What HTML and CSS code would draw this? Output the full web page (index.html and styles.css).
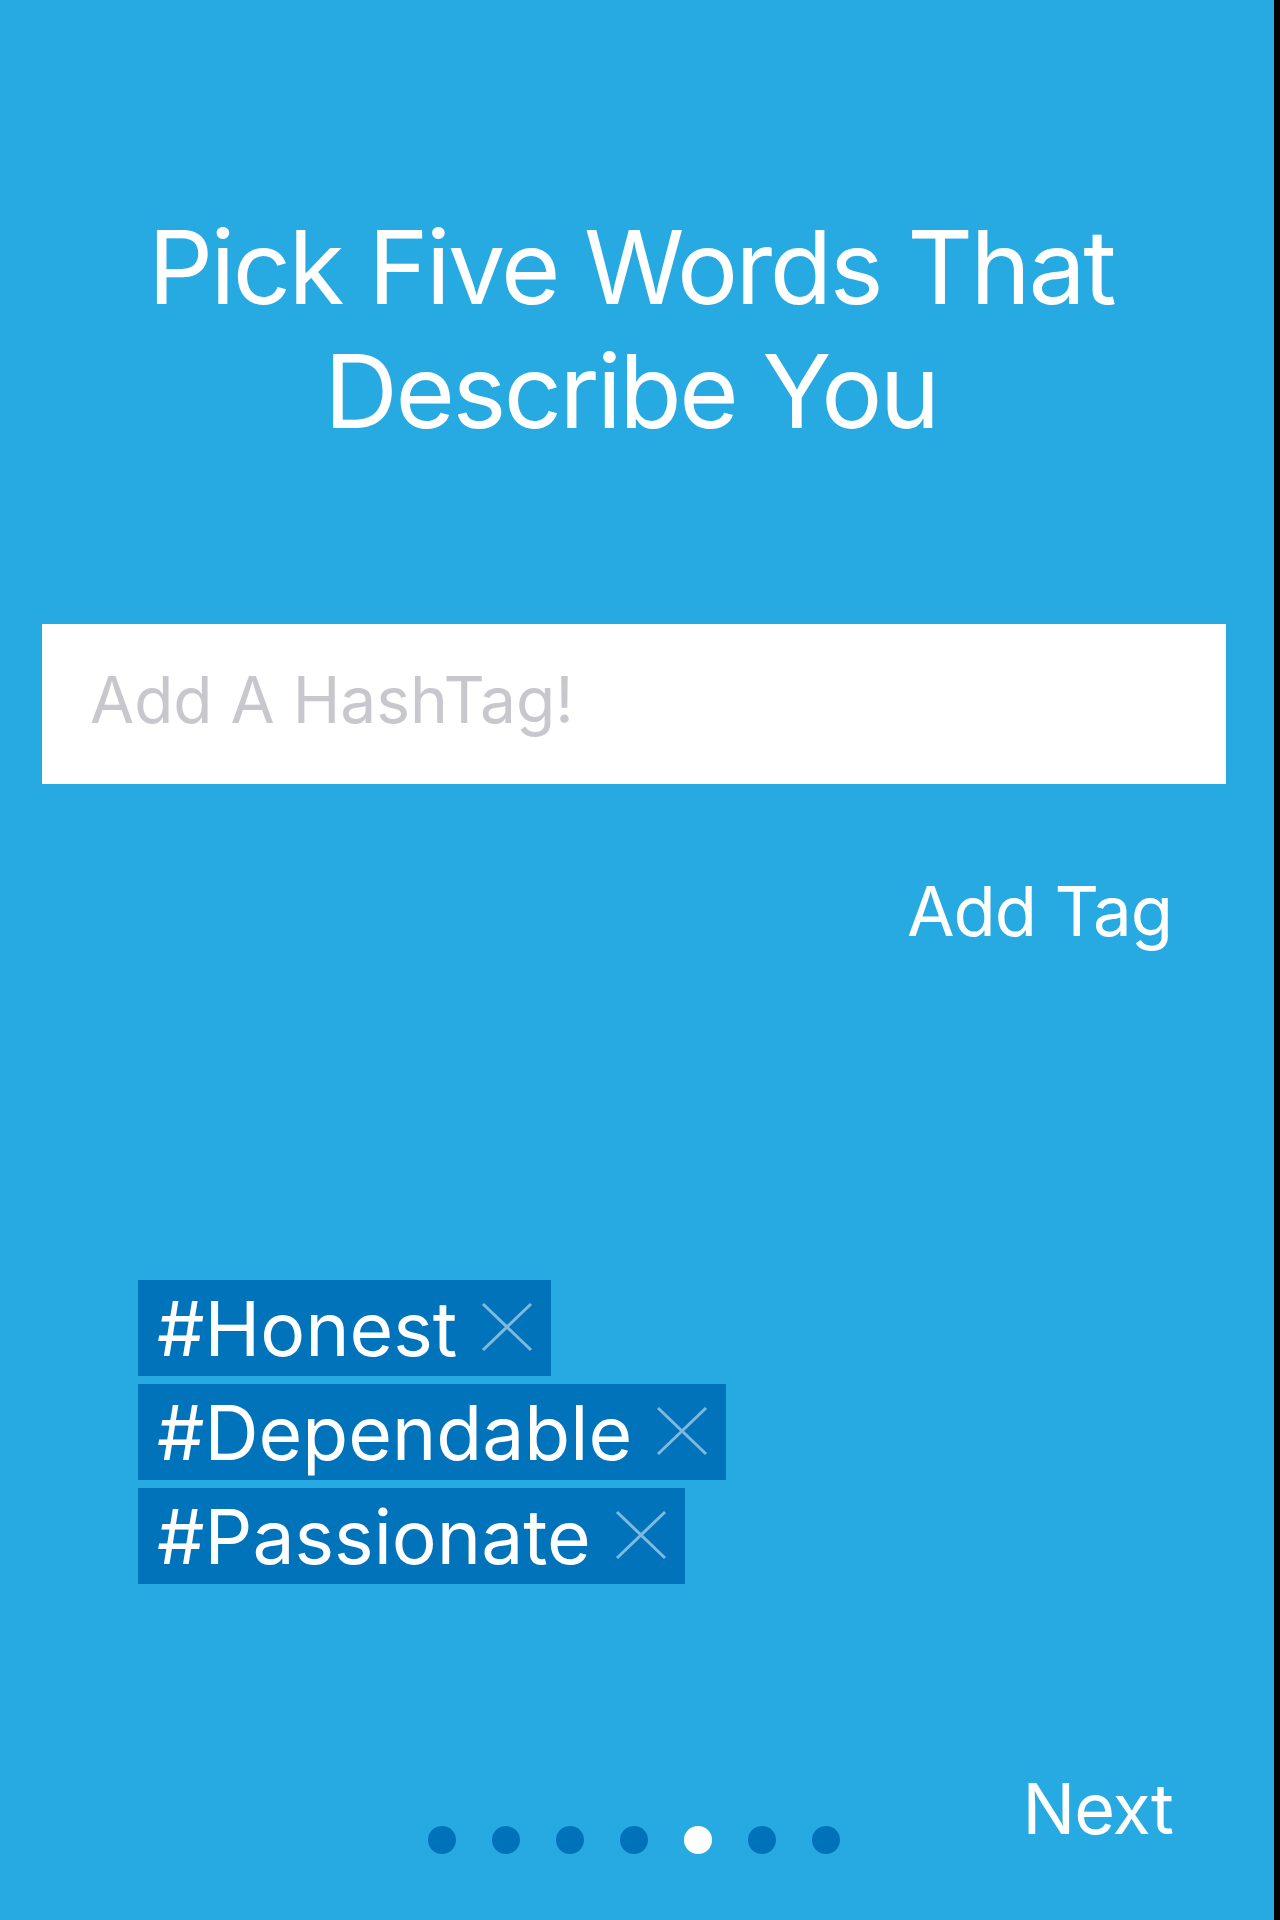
FILE: index.html
```html
<!DOCTYPE html>
<html lang="en">
<head>
<meta charset="utf-8">
<title>Pick Five Words</title>
<link rel="stylesheet" href="styles.css">
</head>
<body>
<main class="screen">
  <h1 class="title">Pick Five Words That<br>Describe You</h1>
  <input class="tag-input" type="text" placeholder="Add A HashTag!">
  <div class="add-row"><button class="add-btn" type="button">Add Tag</button></div>
  <ul class="tags">
    <li class="tag"><span class="tag-text">#Honest</span><svg class="tag-x" viewBox="0 0 52 50" width="52" height="50"><path d="M2 2 L50 48 M50 2 L2 48"/></svg></li>
    <li class="tag"><span class="tag-text">#Dependable</span><svg class="tag-x" viewBox="0 0 52 50" width="52" height="50"><path d="M2 2 L50 48 M50 2 L2 48"/></svg></li>
    <li class="tag"><span class="tag-text">#Passionate</span><svg class="tag-x" viewBox="0 0 52 50" width="52" height="50"><path d="M2 2 L50 48 M50 2 L2 48"/></svg></li>
  </ul>
  <footer class="footer">
    <div class="spacer"></div>
    <div class="dots">
      <span class="dot"></span><span class="dot"></span><span class="dot"></span><span class="dot"></span><span class="dot active"></span><span class="dot"></span><span class="dot"></span>
    </div>
    <div class="next-wrap"><button class="next-btn" type="button">Next</button></div>
  </footer>
</main>
</body>
</html>
```

FILE: styles.css
```css
html, body {
  margin: 0;
  padding: 0;
  background: #000;
}
.screen {
  width: 1274px;
  height: 1920px;
  background: #27aae1;
  font-family: Inter, "Noto Sans", sans-serif;
  color: #fff;
  display: flex;
  flex-direction: column;
  overflow: hidden;
  box-sizing: border-box;
  padding-top: 205px;
}
.title {
  margin: 0;
  padding-right: 12px;
  font-weight: 400;
  font-size: 102px;
  line-height: 124px;
  text-align: center;
  letter-spacing: -2.5px;
}
.tag-input {
  margin: 171px 0 0 42px;
  width: 1184px;
  height: 160px;
  box-sizing: border-box;
  border: 0;
  outline: none;
  background: #fff;
  padding: 0 0 10px 48px;
  font-family: Inter, "Noto Sans", sans-serif;
  font-size: 64px;
  color: #333;
}
.tag-input::placeholder {
  color: #c7c7cd;
}
.add-row {
  margin-top: 93px;
  display: flex;
  justify-content: flex-end;
  padding-right: 102px;
}
.add-btn, .next-btn {
  border: 0;
  background: none;
  padding: 0;
  color: #fff;
  font-family: Inter, "Noto Sans", sans-serif;
  font-size: 69px;
  line-height: 69px;
  letter-spacing: -1px;
}
.tags {
  list-style: none;
  margin: 334px 0 0 138px;
  padding: 0;
  display: flex;
  flex-direction: column;
  align-items: flex-start;
  gap: 8px;
}
.tag {
  background: #0073bb;
  height: 96px;
  display: flex;
  align-items: center;
  padding: 0 18px 0 19px;
  gap: 24px;
}
.tag-text {
  font-size: 75px;
  line-height: 96px;
  padding-top: 2px;
}
.tag-x {
  display: block;
  margin-top: -2px;
}
.tag-x path {
  stroke: rgba(255, 255, 255, 0.5);
  stroke-width: 3;
  fill: none;
}
.footer {
  margin-top: 190px;
  display: grid;
  grid-template-columns: 1fr auto 1fr;
  align-items: start;
  padding-right: 6px;
}
.dots {
  display: flex;
  gap: 36px;
  margin-top: 52px;
}
.dot {
  width: 28px;
  height: 28px;
  border-radius: 50%;
  background: #0072b9;
}
.dot.active {
  background: #fff;
}
.next-wrap {
  display: flex;
  justify-content: flex-end;
  padding-right: 95px;
}
.next-btn {
  font-size: 70px;
  line-height: 70px;
}
```
